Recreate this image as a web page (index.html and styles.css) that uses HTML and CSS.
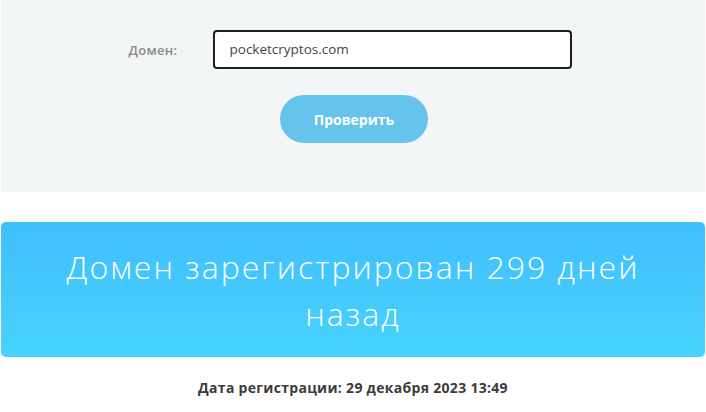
FILE: index.html
```html
<!DOCTYPE html>
<html lang="ru">
<head>
<meta charset="utf-8">
<title>Проверка домена</title>
<link rel="stylesheet" href="styles.css">
</head>
<body>
<section class="panel">
  <form class="form">
    <div class="row">
      <label class="label" for="domain">Домен:</label>
      <div class="input">pocketcryptos.com</div>
    </div>
    <button class="btn" type="button">Проверить</button>
  </form>
</section>
<section class="result">
  <h1 class="result-text">Домен зарегистрирован 299 дней назад</h1>
</section>
<p class="date">Дата регистрации: 29 декабря 2023 13:49</p>
</body>
</html>
```
FILE: styles.css
```css
html, body {
  margin: 0;
  padding: 0;
  background: #ffffff;
  font-family: "Open Sans", "DejaVu Sans", sans-serif;
}
.panel {
  margin-left: 1px;
  width: 704px;
  height: 192px;
  box-sizing: border-box;
  background: #f3f6f7;
  padding-top: 30px;
}
.form {
  display: flex;
  flex-direction: column;
  align-items: center;
}
.row {
  display: flex;
  align-items: center;
  margin-right: 6px;
}
.label {
  width: 84px;
  box-sizing: border-box;
  font-size: 13px;
  font-weight: 600;
  color: #8a8a8a;
  letter-spacing: 0.3px;
}
.input {
  width: 359px;
  height: 39px;
  box-sizing: border-box;
  border: 2px solid #1e1e1e;
  border-radius: 4px;
  background: #ffffff;
  padding: 0 15px 2px 15px;
  display: flex;
  align-items: center;
  font-size: 13.5px;
  color: #454545;
}
.btn {
  margin-top: 26px;
  width: 148px;
  height: 48px;
  border: none;
  border-radius: 24px;
  background: #66c4ec;
  color: #ffffff;
  font-family: "Open Sans", "DejaVu Sans", sans-serif;
  font-size: 14px;
  font-weight: 700;
  padding: 0;
  margin-left: 2px;
}
.result {
  margin: 30px 1px 0 1px;
  height: 135px;
  border-radius: 5px;
  background: linear-gradient(180deg, #40befd 0%, #48d3fd 100%);
  display: flex;
  align-items: center;
  justify-content: center;
}
.result-text {
  margin: 0;
  max-width: 600px;
  text-align: center;
  color: #ffffff;
  font-size: 32px;
  font-weight: 300;
  line-height: 47px;
  letter-spacing: 2px;
}
.date {
  margin: 21px 0 0 0;
  text-align: center;
  font-size: 14px;
  font-weight: 700;
  color: #3c3c3c;
  letter-spacing: 0.3px;
}
```
